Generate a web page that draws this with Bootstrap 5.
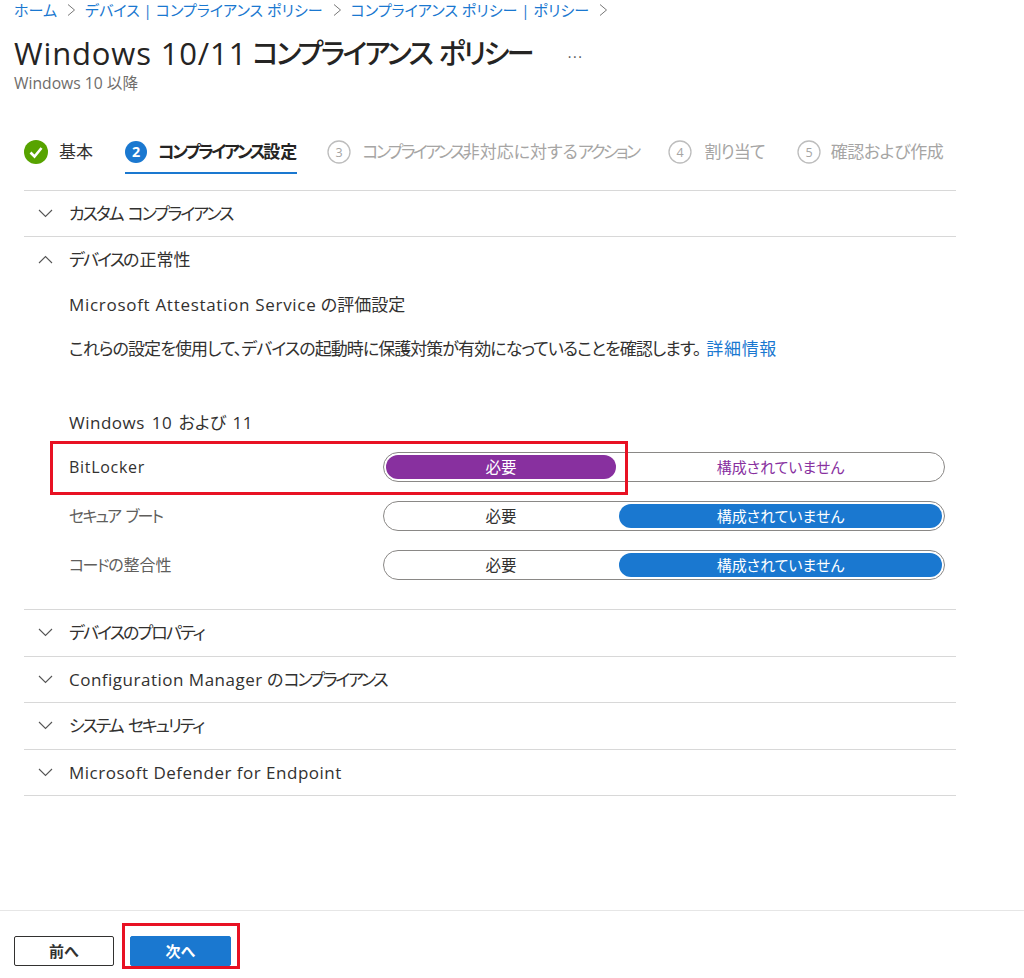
<!DOCTYPE html>
<html lang="ja">
<head>
<meta charset="utf-8">
<title>Windows 10/11 コンプライアンス ポリシー</title>
<link href="https://cdn.jsdelivr.net/npm/bootstrap@5.3.0/dist/css/bootstrap.min.css" rel="stylesheet">
<style>
html,body{height:978px;overflow:hidden;background:#fff}
body{font-family:"Open Sans","Noto Sans CJK JP",sans-serif;font-feature-settings:"palt";color:#323130;font-size:17px}
.pg{position:relative;height:978px;display:flex;flex-direction:column}
.kn{letter-spacing:-1.9px}
.lt{letter-spacing:.5px}
.crumbs{padding:0 0 0 14px;height:20px;line-height:20px;font-size:15.05px;gap:8px;white-space:nowrap}
.crumbs a{color:#1a78d0;text-decoration:none}
.crumbs svg{width:12px;height:12px}
.ttl{margin:0;padding:14px 0 1px 14px;height:53px;display:flex;align-items:center;font-weight:500;color:#252423;white-space:nowrap}
.tl{font-size:31px;letter-spacing:.85px;line-height:38px;margin-right:5px}
.tk{font-size:28px;letter-spacing:-2.6px;word-spacing:3px;line-height:38px}
.more{font-size:14px;color:#555;margin-left:36px;letter-spacing:1.5px;font-weight:400}
.sub{padding:0 0 0 14px;font-size:15.7px;line-height:20px;color:#6f6d6b}
.steps{margin:39px 68px 0 24px;height:57.6px;gap:30px;white-space:nowrap}
.stp{height:40px;display:flex;align-items:center;gap:11px;color:#a6a5a4}
.stp:first-child{margin-right:2px}
.stp:last-child{margin-left:2px;gap:10px}
.stp.act{color:#252423;font-weight:600;border-bottom:2px solid #1a78d0;height:42px}
.stp.dn{color:#323130}
.stp svg{width:24px;height:24px;flex:none}
.stp.act svg{width:22px;height:22px}
.stp .kn{letter-spacing:-2.6px}
.stp.act .kn{letter-spacing:-2.4px}
.tight{letter-spacing:-.4px}
.tight2{letter-spacing:-.9px;margin-left:1px}
.acc{margin:0 68px 0 24px;border-top:1px solid #d8d8d8}
.sec{border-bottom:1px solid #d8d8d8}
.hdr{height:45.5px;display:flex;align-items:center;gap:16px;padding-left:14px;color:#323130;white-space:nowrap}
.hdr svg{width:15px;height:9px;flex:none}
.hdr .w{word-spacing:3px;letter-spacing:-2.1px}
.bd{height:326.5px;padding:10px 11px 0 45px}
.lbl{line-height:24px}
.lbl .lt{letter-spacing:.7px}
.bd a{color:#1a78d0;text-decoration:none;margin-left:6px}
.lh2{margin-top:20px;line-height:24px;white-space:nowrap;letter-spacing:-.95px}
.lh2 a{letter-spacing:.7px}
.lh3{margin-top:50px;line-height:24px;word-spacing:2px}
.setrow{height:49px;display:flex;align-items:center;justify-content:space-between;color:#605e5c;font-size:16px}
.setrow.on{color:#323130;margin-top:8px}
.setrow.on>span{letter-spacing:.7px}
.setrow .kn{letter-spacing:-1.5px}
.setrow .w{word-spacing:3px;letter-spacing:-1.8px}
.tog{width:562px;height:30px;border:1.5px solid #8a8886;border-radius:15px;padding:2px;display:flex;gap:3px;font-size:15.5px}
.tog span{border-radius:12px;display:flex;align-items:center;justify-content:center;color:#323130;line-height:1;padding-top:1px}
.tog .lf{flex:0 0 230px}
.tog .rt{flex:1 1 auto;font-size:15px}
.tog span.b{background:#1a78d0;color:#fff}
.tog span.p{background:#88309f;color:#fff}
.tog span.pt{color:#88309f}
.hdr .k2{letter-spacing:-2.3px}
.foot{position:absolute;left:0;right:0;top:910px;border-top:1px solid #e6e6e6;padding:25px 0 0 14px;gap:16px}
.bt{width:100px;height:30px;border-radius:2px;font-size:15px;font-weight:700;padding:0;line-height:28px}
.bt-prev{border:1px solid #323130;background:#fff;color:#323130}
.bt-next{border:1px solid #1a78d0;background:#1a78d0;color:#fff;width:101px}
.redbox{position:absolute;border:3px solid #e81123;pointer-events:none}
.rb1{left:50px;top:441px;width:578px;height:54px}
.rb2{left:122px;top:923px;width:118px;height:46px}
</style>
</head>
<body>
<div class="pg">
  <nav class="crumbs d-flex align-items-center" aria-label="パンくず">
    <a href="#">ホーム</a><svg viewBox="0 0 12 12"><path d="M3 .5L9.500 6 3 11.500" fill="none" stroke="#777" stroke-width="1"/></svg>
    <a href="#">デバイス | コンプライアンス ポリシー</a><svg viewBox="0 0 12 12"><path d="M3 .5L9.500 6 3 11.500" fill="none" stroke="#777" stroke-width="1"/></svg>
    <a href="#">コンプライアンス ポリシー | ポリシー</a><svg viewBox="0 0 12 12"><path d="M3 .5L9.500 6 3 11.500" fill="none" stroke="#777" stroke-width="1"/></svg>
  </nav>
  <h1 class="ttl"><span class="tl">Windows 10/11</span><span class="tk">コンプライアンス ポリシー</span><span class="more">...</span></h1>
  <div class="sub">Windows 10 以降</div>

  <div class="steps d-flex align-items-start">
    <div class="stp dn"><svg viewBox="0 0 24 24"><circle cx="12" cy="12" r="12" fill="#57a300"/><path d="M6.500 12.500l4 4 7-8.500" fill="none" stroke="#fff" stroke-width="2.600"/></svg><span>基本</span></div>
    <div class="stp act"><svg viewBox="0 0 20 20"><circle cx="10" cy="10" r="10" fill="#1a78d0"/><text x="10" y="14.500" text-anchor="middle" font-size="13" font-weight="700" fill="#fff">2</text></svg><span><span class="kn">コンプライアンス</span>設定</span></div>
    <div class="stp"><svg viewBox="0 0 24 24"><circle cx="12" cy="12" r="11" fill="none" stroke="#bdbdbd" stroke-width="1.300"/><text x="12" y="16.500" text-anchor="middle" font-size="12.500" fill="#a6a5a4">3</text></svg><span><span class="kn">コンプライアンス</span>非対応に対する<span class="kn">アクション</span></span></div>
    <div class="stp"><svg viewBox="0 0 24 24"><circle cx="12" cy="12" r="11" fill="none" stroke="#bdbdbd" stroke-width="1.300"/><text x="12" y="16.500" text-anchor="middle" font-size="12.500" fill="#a6a5a4">4</text></svg><span class="tight2">割り当て</span></div>
    <div class="stp"><svg viewBox="0 0 24 24"><circle cx="12" cy="12" r="11" fill="none" stroke="#bdbdbd" stroke-width="1.300"/><text x="12" y="16.500" text-anchor="middle" font-size="12.500" fill="#a6a5a4">5</text></svg><span class="tight">確認および作成</span></div>
  </div>

  <div class="acc">
    <div class="sec"><div class="hdr"><svg viewBox="0 0 15 9"><path d="M1 1l6.500 6.500L14 1" fill="none" stroke="#555" stroke-width="1.100"/></svg><span class="w">カスタム コンプライアンス</span></div></div>
    <div class="sec">
      <div class="hdr"><svg viewBox="0 0 15 9"><path d="M1 8l6.500-6.500L14 8" fill="none" stroke="#555" stroke-width="1.100"/></svg><span><span class="kn">デバイス</span>の正常性</span></div>
      <div class="bd">
        <div class="lbl"><span class="lt">Microsoft Attestation Service</span> の評価設定</div>
        <div class="lh2">これらの設定を使用して、デバイスの起動時に保護対策が有効になっていることを確認します。<a href="#">詳細情報</a></div>
        <div class="lh3"><span class="lt">Windows 10</span> および <span class="lt">11</span></div>
        <div class="setrow on"><span>BitLocker</span><div class="tog"><span class="lf p">必要</span><span class="rt pt">構成されていません</span></div></div>
        <div class="setrow"><span class="w">セキュア ブート</span><div class="tog"><span class="lf">必要</span><span class="rt b">構成されていません</span></div></div>
        <div class="setrow"><span><span class="kn">コード</span>の整合性</span><div class="tog"><span class="lf">必要</span><span class="rt b">構成されていません</span></div></div>
      </div>
    </div>
    <div class="sec"><div class="hdr"><svg viewBox="0 0 15 9"><path d="M1 1l6.500 6.500L14 1" fill="none" stroke="#555" stroke-width="1.100"/></svg><span class="kn">デバイスのプロパティ</span></div></div>
    <div class="sec"><div class="hdr"><svg viewBox="0 0 15 9"><path d="M1 1l6.500 6.500L14 1" fill="none" stroke="#555" stroke-width="1.100"/></svg><span><span class="lt">Configuration Manager</span> の<span class="k2">コンプライアンス</span></span></div></div>
    <div class="sec"><div class="hdr"><svg viewBox="0 0 15 9"><path d="M1 1l6.500 6.500L14 1" fill="none" stroke="#555" stroke-width="1.100"/></svg><span class="w">システム セキュリティ</span></div></div>
    <div class="sec"><div class="hdr"><svg viewBox="0 0 15 9"><path d="M1 1l6.500 6.500L14 1" fill="none" stroke="#555" stroke-width="1.100"/></svg><span class="lt">Microsoft Defender for Endpoint</span></div></div>
  </div>

  <div class="foot d-flex">
    <button type="button" class="btn bt bt-prev">前へ</button>
    <button type="button" class="btn bt bt-next">次へ</button>
  </div>
  <div class="redbox rb1"></div>
  <div class="redbox rb2"></div>
</div>
<script src="https://cdn.jsdelivr.net/npm/bootstrap@5.3.0/dist/js/bootstrap.bundle.min.js"></script>
</body>
</html>
